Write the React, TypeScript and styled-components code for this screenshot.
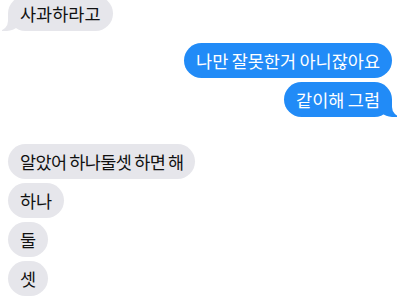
import React from "react";
import styled, { createGlobalStyle, css } from "styled-components";

const Global = createGlobalStyle`
  html, body { margin: 0; padding: 0; background: #ffffff; }
  body { font-family: "Noto Sans CJK KR", "Noto Sans", sans-serif; }
`;

const GRAY = "#e6e6eb";
const BLUE = "#218bf7";

const Page = styled.div`
  width: 400px;
  height: 300px;
  overflow: hidden;
  display: flex;
  flex-direction: column;
  padding: 0 8px;
  box-sizing: border-box;
`;

const Group = styled.div<{ $side: "left" | "right"; $top: number }>`
  display: flex;
  flex-direction: column;
  align-items: ${(p) => (p.$side === "left" ? "flex-start" : "flex-end")};
  gap: 4px;
  margin-top: ${(p) => p.$top}px;
`;

const Bubble = styled.div<{ $side: "left" | "right"; $tail?: boolean; $squeeze?: number }>`
  position: relative;
  box-sizing: border-box;
  height: 35px;
  line-height: 35px;
  padding: 0 12px;
  border-radius: 18px;
  font-size: 17.5px;
  word-spacing: -0.5px;
  letter-spacing: ${(p) => (p.$squeeze ? `-${p.$squeeze}px` : "0")};
  white-space: nowrap;
  background: ${(p) => (p.$side === "left" ? GRAY : BLUE)};
  color: ${(p) => (p.$side === "left" ? "#111111" : "#ffffff")};

  ${(p) =>
    p.$tail &&
    p.$side === "left" &&
    css`
      &::before {
        content: "";
        position: absolute;
        bottom: 0;
        left: -6px;
        width: 20px;
        height: 18px;
        background: ${GRAY};
        border-bottom-right-radius: 15px;
      }
      &::after {
        content: "";
        position: absolute;
        bottom: 0;
        left: -24px;
        width: 24px;
        height: 18px;
        background: #ffffff;
        border-bottom-right-radius: 10px;
      }
    `}

  ${(p) =>
    p.$tail &&
    p.$side === "right" &&
    css`
      &::before {
        content: "";
        position: absolute;
        bottom: 0;
        right: -5px;
        width: 20px;
        height: 18px;
        background: ${BLUE};
        border-bottom-left-radius: 15px;
      }
      &::after {
        content: "";
        position: absolute;
        bottom: 0;
        right: -24px;
        width: 24px;
        height: 18px;
        background: #ffffff;
        border-bottom-left-radius: 10px;
      }
    `}
`;

const Text = styled.span`
  position: relative;
  z-index: 1;
`;

export default function App() {
  return (
    <>
      <Global />
      <Page>
        <Group $side="left" $top={-4}>
          <Bubble $side="left" $tail>
            <Text>사과하라고</Text>
          </Bubble>
        </Group>
        <Group $side="right" $top={12}>
          <Bubble $side="right">
            <Text>나만 잘못한거 아니잖아요</Text>
          </Bubble>
          <Bubble $side="right" $tail>
            <Text>같이해 그럼</Text>
          </Bubble>
        </Group>
        <Group $side="left" $top={27}>
          <Bubble $side="left" $squeeze={0.6}>
            <Text>알았어 하나둘셋 하면 해</Text>
          </Bubble>
          <Bubble $side="left">
            <Text>하나</Text>
          </Bubble>
          <Bubble $side="left">
            <Text>둘</Text>
          </Bubble>
          <Bubble $side="left">
            <Text>셋</Text>
          </Bubble>
        </Group>
      </Page>
    </>
  );
}
